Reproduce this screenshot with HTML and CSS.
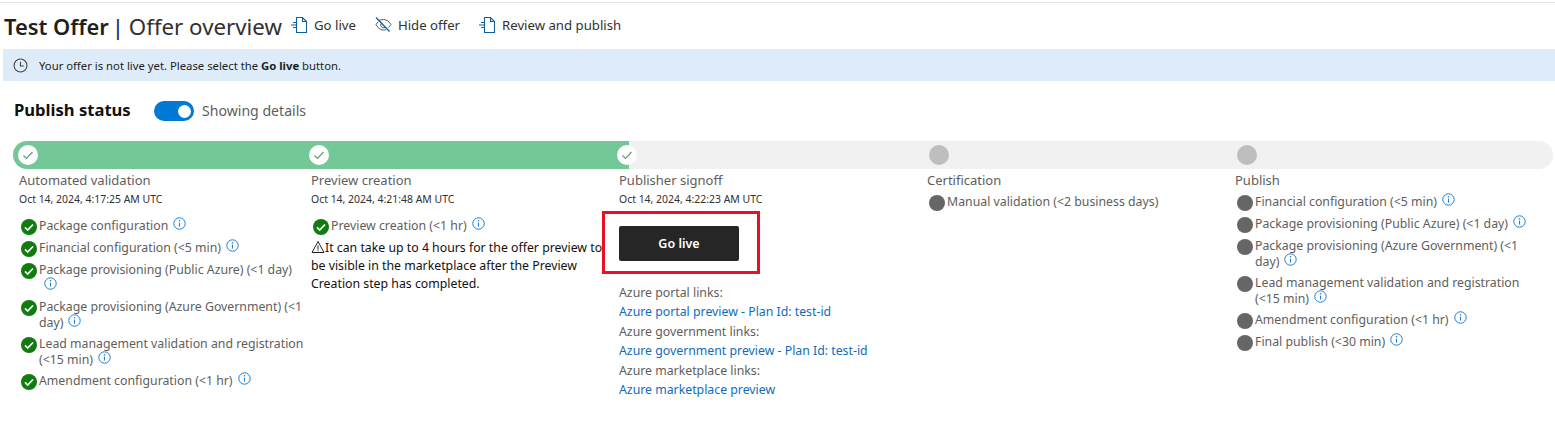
FILE: index.html
```html
<!DOCTYPE html>
<html lang="en">
<head>
<meta charset="utf-8">
<title>Offer overview</title>
<link rel="stylesheet" href="styles.css">
</head>
<body>
<svg class="defs" width="0" height="0" aria-hidden="true">
  <symbol id="doc" viewBox="0 0 18 18"><path d="M6.500 1.500h6l4 4v11h-10z M12.500 1.500v4h4" fill="none" stroke="#0f5f9e" stroke-width="1.100"/><path d="M3 6.500h3M1 9h5M3 11.500h3" fill="none" stroke="#0f5f9e" stroke-width="1"/></symbol>
  <symbol id="info" viewBox="0 0 13 13"><circle cx="6.500" cy="6.500" r="5.700" fill="none" stroke="#1f7fd0" stroke-width="1"/><path d="M6.500 5.600v4" stroke="#1f7fd0" stroke-width="1.100"/><circle cx="6.500" cy="3.700" r=".8" fill="#1f7fd0"/></symbol>
  <symbol id="ok" viewBox="0 0 16 16"><circle cx="8" cy="8" r="8" fill="#107c10"/><path d="M4 8.400l2.700 2.600L12 5.500" fill="none" stroke="#fff" stroke-width="1.700"/></symbol>
  <symbol id="tick" viewBox="0 0 12 12"><path d="M1.500 6.500l3 3L10.500 3" fill="none" stroke="#5f9f7f" stroke-width="1.200"/></symbol>
</svg>

<div class="topline"></div>
<header class="titlebar">
  <h1 class="title"><b>Test Offer</b> <span class="pipe">|</span> Offer overview</h1>
  <nav class="actions">
    <a class="action"><svg class="action-icon"><use href="#doc"/></svg>Go live</a>
    <a class="action"><svg class="action-icon" viewBox="0 0 18 18"><path d="M5 4.500C6.500 3.800 8 3.500 9.500 3.500c3 0 5.500 2 7.500 5-.8 1.200-1.700 2.200-2.700 3M12 13.700c-.8.300-1.600.4-2.500.4-3 0-5.500-2-7.500-5.500.7-1.100 1.500-2 2.400-2.800M7 7.500a3 3 0 0 0 4 4" fill="none" stroke="#4a5a68" stroke-width="1"/><path d="M2 1.500l13.500 14" stroke="#0f5f9e" stroke-width="1.300"/></svg>Hide offer</a>
    <a class="action"><svg class="action-icon"><use href="#doc"/></svg>Review and publish</a>
  </nav>
</header>
<div class="banner">
  <svg class="clock" viewBox="0 0 14 14"><circle cx="7" cy="7" r="6" fill="none" stroke="#444" stroke-width="1"/><path d="M7 3.500V7.500H10" fill="none" stroke="#444" stroke-width="1"/></svg>
  <span>Your offer is not live yet. Please select the <b>Go live</b> button.</span>
</div>
<div class="status-head">
  <h2 class="status-title">Publish status</h2>
  <span class="toggle"><span class="knob"></span></span>
  <span class="toggle-label">Showing details</span>
</div>

<div class="bar">
  <span class="step done"><svg class="tick"><use href="#tick"/></svg></span>
  <span class="step done"><svg class="tick"><use href="#tick"/></svg></span>
  <span class="step done"><svg class="tick"><use href="#tick"/></svg></span>
  <span class="step todo"></span>
  <span class="step todo"></span>
</div>

<main class="columns">
  <section class="col col-1">
    <h3 class="col-title">Automated validation</h3>
    <p class="stamp">Oct 14, 2024, 4:17:25 AM UTC</p>
    <ul class="checks">
      <li><svg class="mark"><use href="#ok"/></svg><span>Package configuration<svg class="info"><use href="#info"/></svg></span></li>
      <li><svg class="mark"><use href="#ok"/></svg><span>Financial configuration (&lt;5 min)<svg class="info"><use href="#info"/></svg></span></li>
      <li><svg class="mark"><use href="#ok"/></svg><span>Package provisioning (Public Azure) (&lt;1 day)<svg class="info"><use href="#info"/></svg></span></li>
      <li><svg class="mark"><use href="#ok"/></svg><span>Package provisioning (Azure Government) (&lt;1 day)<svg class="info"><use href="#info"/></svg></span></li>
      <li><svg class="mark"><use href="#ok"/></svg><span>Lead management validation and registration (&lt;15 min)<svg class="info"><use href="#info"/></svg></span></li>
      <li><svg class="mark"><use href="#ok"/></svg><span>Amendment configuration (&lt;1 hr)<svg class="info"><use href="#info"/></svg></span></li>
    </ul>
  </section>
  <section class="col col-2">
    <h3 class="col-title">Preview creation</h3>
    <p class="stamp">Oct 14, 2024, 4:21:48 AM UTC</p>
    <ul class="checks">
      <li><svg class="mark"><use href="#ok"/></svg><span>Preview creation (&lt;1 hr)<svg class="info"><use href="#info"/></svg></span></li>
    </ul>
    <p class="warning"><svg class="warn" viewBox="0 0 14 14"><path d="M7 1.500L13 12.500H1z M7 5.500v4M7 10.300v1" fill="none" stroke="#222" stroke-width="1"/></svg>It can take up to 4 hours for the offer preview to be visible in the marketplace after the Preview Creation step has completed.</p>
  </section>
  <section class="col col-3">
    <h3 class="col-title">Publisher signoff</h3>
    <p class="stamp">Oct 14, 2024, 4:22:23 AM UTC</p>
    <div class="callout"><button class="go">Go live</button></div>
    <div class="links">
      <p>Azure portal links:</p>
      <a>Azure portal preview - Plan Id: test-id</a>
      <p>Azure government links:</p>
      <a>Azure government preview - Plan Id: test-id</a>
      <p>Azure marketplace links:</p>
      <a>Azure marketplace preview</a>
    </div>
  </section>
  <section class="col col-4">
    <h3 class="col-title">Certification</h3>
    <ul class="checks compact">
      <li><span class="mark pending"></span><span>Manual validation (&lt;2 business days)</span></li>
    </ul>
  </section>
  <section class="col col-5">
    <h3 class="col-title">Publish</h3>
    <ul class="checks compact">
      <li><span class="mark pending"></span><span>Financial configuration (&lt;5 min)<svg class="info"><use href="#info"/></svg></span></li>
      <li><span class="mark pending"></span><span>Package provisioning (Public Azure) (&lt;1 day)<svg class="info"><use href="#info"/></svg></span></li>
      <li><span class="mark pending"></span><span>Package provisioning (Azure Government) (&lt;1 day)<svg class="info"><use href="#info"/></svg></span></li>
      <li><span class="mark pending"></span><span>Lead management validation and registration (&lt;15 min)<svg class="info"><use href="#info"/></svg></span></li>
      <li><span class="mark pending"></span><span>Amendment configuration (&lt;1 hr)<svg class="info"><use href="#info"/></svg></span></li>
      <li><span class="mark pending"></span><span>Final publish (&lt;30 min)<svg class="info"><use href="#info"/></svg></span></li>
    </ul>
  </section>
</main>
</body>
</html>
```

FILE: styles.css
```css
* { box-sizing: border-box; }
html, body { margin: 0; padding: 0; }
body {
  font-family: "Noto Sans", "Open Sans", sans-serif;
  font-size: 12.3px;
  color: #605e5c;
  background: #fff;
  overflow: hidden;
}
.defs { display: block; height: 0; }
h1, h2, h3, p, ul { margin: 0; padding: 0; }
ul { list-style: none; }

.topline { height: 1px; margin-top: 2px; background: #e6e6e6; }

.titlebar { display: flex; align-items: center; height: 46px; padding-left: 4px; }
.title { font-size: 22.3px; font-weight: 400; color: #323130; white-space: nowrap; }
.title b { font-size: 21.9px; font-weight: 600; color: #201f1e; }
.pipe { margin: 0 -1px 0 -3px; color: #1b1a6b; }
.actions { display: flex; margin-left: 8px; margin-top: -2px; gap: 18px; }
.action { display: flex; align-items: center; gap: 6px; font-size: 13.2px; color: #323130; }
.action-icon { width: 18px; height: 18px; }

.banner {
  display: flex; align-items: center; gap: 11px;
  height: 32px; margin-left: 3px; padding-left: 10px;
  background: #deecf9; color: #201f1e; font-size: 11.3px;
}
.clock { width: 15px; height: 15px; }

.status-head { display: flex; align-items: center; height: 60px; padding-left: 14px; }
.status-title { font-size: 16.6px; font-weight: 700; color: #111; width: 140px; margin-top: -3px; }
.toggle { display: flex; justify-content: flex-end; align-items: center; width: 40px; height: 20px; padding-right: 3px; border-radius: 10px; background: #0078d4; }
.knob { width: 13px; height: 13px; border-radius: 50%; background: #fff; }
.toggle-label { margin-left: 8px; margin-top: -1px; font-size: 14.1px; color: #605e5c; }

.bar {
  display: grid;
  grid-template-columns: 291px 308px 312px 308px 1fr;
  align-items: center;
  width: 1540px; height: 28px; margin-left: 13px; padding-left: 5px;
  border-radius: 14px;
  background: linear-gradient(to right, #74c898 616px, #f1f1f1 616px);
}
.step { display: flex; align-items: center; justify-content: center; width: 20px; height: 20px; border-radius: 50%; }
.step.done { background: #fff; }
.step.todo { background: #bebebe; }
.tick { width: 12px; height: 12px; }

.columns {
  display: grid;
  grid-template-columns: 292px 308px 308px 308px 1fr;
  padding-left: 19px;
  padding-top: 3px;
}
.col-title { font-size: 13px; font-weight: 400; line-height: 17px; color: #605e5c; }
.stamp { margin-top: 3px; font-size: 10.45px; line-height: 15px; color: #323130; }

.checks { margin-top: 10.5px; margin-left: 2px; width: 283px; display: flex; flex-direction: column; gap: 4px; }
.checks.compact { margin-top: 4.5px; width: 301px; }
.checks li { display: flex; line-height: 16.5px; }
.checks .mark { flex: none; width: 16px; height: 16px; margin-top: 1px; margin-bottom: 1px; margin-right: 2px; }
.mark.pending { display: block; border-radius: 50%; background: #666; }
.info { width: 13px; height: 13px; margin-top: -2px; margin-left: 5px; vertical-align: 0; }

.warning { width: 292px; margin-top: 3px; color: #111; line-height: 18px; }
.warn { width: 14px; height: 14px; margin-top: -2px; vertical-align: -2px; }

.callout { width: 158px; height: 63px; margin-top: 4px; margin-left: -17px; padding: 12px 0 0 14px; border: 3px solid #e81123; }
.go { display: block; width: 120px; height: 35px; border: 0; border-radius: 2px; background: #262626; color: #fff; font: 600 12.5px "Noto Sans", sans-serif; }

.links { margin-top: 9px; line-height: 19.4px; }
.links p { color: #605e5c; }
.links a { display: block; color: #0f6cbd; }
```
